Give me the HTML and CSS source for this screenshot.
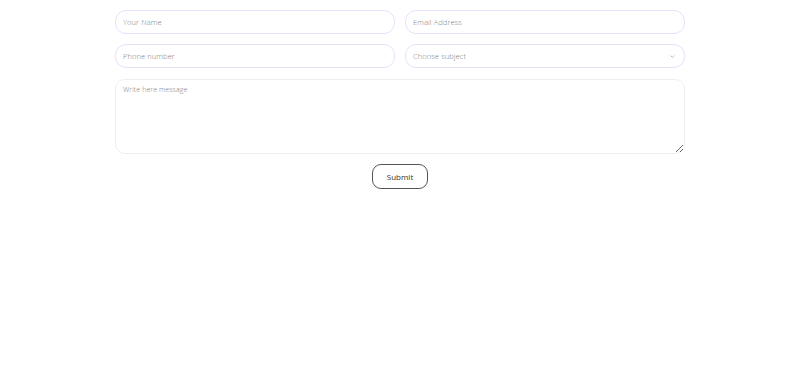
FILE: index.html
```html
<!DOCTYPE html>
<html>
<head>
<meta charset="utf-8">
<link rel="stylesheet" href="styles.css">
</head>
<body>
<form class="contact">
  <div class="row">
    <input class="field" type="text" placeholder="Your Name">
    <input class="field" type="email" placeholder="Email Address">
  </div>
  <div class="row">
    <input class="field" type="tel" placeholder="Phone number">
    <div class="select-wrap">
      <select class="field select">
        <option>Choose subject</option>
      </select>
      <svg class="chev" width="5" height="3" viewBox="0 0 5 3"><path d="M0.5 0.5 L2.5 2.5 L4.5 0.5" fill="none" stroke="#bbb" stroke-width="1"/></svg>
    </div>
  </div>
  <textarea class="message" placeholder="Write here message"></textarea>
  <div class="actions">
    <button class="submit" type="button">Submit</button>
  </div>
</form>
</body>
</html>
```
FILE: styles.css
```css
* { box-sizing: border-box; }
html, body { margin: 0; padding: 0; background: #fff; }
body { font-family: "Open Sans", "DejaVu Sans", sans-serif; }
.contact {
  width: 570px;
  margin: 10px auto 0;
  display: flex;
  flex-direction: column;
  gap: 10px;
}
.row {
  display: grid;
  grid-template-columns: minmax(0, 1fr) minmax(0, 1fr);
  gap: 10px;
}
.field {
  width: 100%;
  height: 24px;
  border: 1px solid #e6e1fa;
  border-radius: 11px;
  padding: 0 0 0 7px;
  font-family: inherit;
  font-size: 7.5px;
  font-weight: 300;
  letter-spacing: 0.1px;
  color: #777;
  background: #fff;
  outline: none;
}
.field::placeholder { color: #7d7d7d; }
.select-wrap {
  position: relative;
  display: flex;
}
.select {
  appearance: none;
  -webkit-appearance: none;
  color: #7d7d7d;
}
.chev {
  position: absolute;
  right: 10px;
  top: 11px;
}
.message {
  display: block;
  width: 100%;
  height: 75px;
  margin-top: 1px;
  border: 1px solid #eeeeee;
  border-radius: 10px;
  padding: 5px 7px;
  font-family: inherit;
  font-size: 7px;
  font-weight: 300;
  letter-spacing: 0.1px;
  color: #777;
  resize: vertical;
  outline: none;
}
.message::placeholder { color: #7d7d7d; }
.actions {
  display: flex;
  justify-content: center;
}
.submit {
  width: 56px;
  height: 25px;
  border: 1px solid #555;
  border-radius: 9px;
  background: #fff;
  font-family: inherit;
  font-size: 8px;
  font-weight: 400;
  color: #3a2f25;
  padding: 0;
}
```
